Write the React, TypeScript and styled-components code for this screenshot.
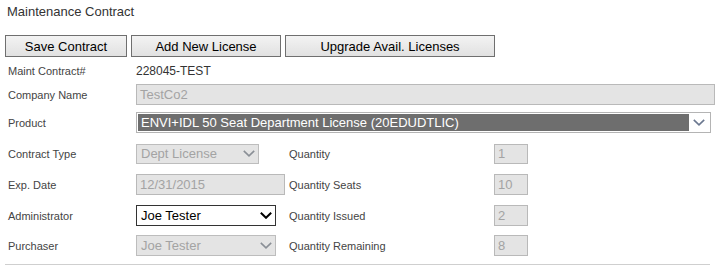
import React from "react";
import styled, { createGlobalStyle } from "styled-components";

const Global = createGlobalStyle`
  html, body { margin: 0; padding: 0; background: #fff; }
  body { font-family: Arial, "Liberation Sans", sans-serif; color: #333; }
`;

const Page = styled.div`
  width: 722px;
  height: 266px;
  overflow: hidden;
`;

const Title = styled.div`
  margin: 4px 0 0 7px;
  font-size: 13px;
  line-height: 16px;
  color: #333;
`;

const Toolbar = styled.div`
  display: flex;
  gap: 4px;
  margin: 15px 0 0 5px;
`;

const Button = styled.button<{ $w: number }>`
  width: ${(p) => p.$w}px;
  height: 22px;
  box-sizing: border-box;
  border: 1px solid #6f6f6f;
  background: linear-gradient(#f3f3f3, #e1e1e1);
  font-family: Arial, "Liberation Sans", sans-serif;
  font-size: 13px;
  color: #000;
  padding: 0;
  margin: 0;
`;

const Form = styled.div`
  margin: 3px 0 0 8px;
  display: flex;
  flex-direction: column;
`;

const Row = styled.div<{ $h: number }>`
  display: flex;
  align-items: center;
  height: ${(p) => p.$h}px;
`;

const Label = styled.div<{ $w: number }>`
  width: ${(p) => p.$w}px;
  flex: none;
  font-size: 11px;
  color: #444;
`;

const Value = styled.div`
  font-size: 12px;
  color: #333;
`;

const Cell = styled.div`
  width: 153px;
  flex: none;
  display: flex;
`;

const TextBox = styled.div<{ $w: number; $h?: number }>`
  width: ${(p) => p.$w}px;
  height: ${(p) => p.$h ?? 21}px;
  box-sizing: border-box;
  border: 1px solid #b9b9b9;
  background: #e4e4e4;
  color: #a3a3a3;
  font-size: 13px;
  line-height: ${(p) => (p.$h ?? 21) - 2}px;
  padding-left: 3px;
  white-space: nowrap;
`;

const SelectBox = styled.div<{ $w: number; $h?: number; $enabled?: boolean }>`
  width: ${(p) => p.$w}px;
  height: ${(p) => p.$h ?? 21}px;
  box-sizing: border-box;
  border: 1px solid ${(p) => (p.$enabled ? "#333" : "#bdbdbd")};
  background: ${(p) => (p.$enabled ? "#fff" : "#e4e4e4")};
  color: ${(p) => (p.$enabled ? "#000" : "#a3a3a3")};
  font-size: 13px;
  display: flex;
  align-items: center;
  justify-content: space-between;
  padding: 0 3px 0 4px;
  white-space: nowrap;
`;

const ProductBox = styled.div`
  width: 575px;
  height: 21px;
  box-sizing: border-box;
  border: 1px solid #b4b4b4;
  background: #fff;
  display: flex;
  align-items: stretch;
  padding: 1px;
`;

const Highlight = styled.div`
  flex: 1;
  background: #6e6e6e;
  color: #fff;
  font-size: 13px;
  line-height: 17px;
  padding-left: 3px;
  white-space: nowrap;
`;

const ChevronCell = styled.div`
  width: 20px;
  display: flex;
  align-items: center;
  justify-content: center;
`;

const Rule = styled.div`
  margin: 4px 12px 0 5px;
  border-top: 1px solid #cfcfcf;
`;

const Chevron = ({ color, weight }: { color: string; weight: number }) => (
  <svg width="12" height="7" viewBox="0 0 12 7">
    <polyline
      points="0.8,0.8 6,5.8 11.2,0.8"
      fill="none"
      stroke={color}
      strokeWidth={weight}
    />
  </svg>
);

export default function App() {
  return (
    <Page>
      <Global />
      <Title>Maintenance Contract</Title>
      <Toolbar>
        <Button $w={122}>Save Contract</Button>
        <Button $w={150}>Add New License</Button>
        <Button $w={210}>Upgrade Avail. Licenses</Button>
      </Toolbar>
      <Form>
        <Row $h={22}>
          <Label $w={128}>Maint Contract#</Label>
          <Value>228045-TEST</Value>
        </Row>
        <Row $h={25}>
          <Label $w={128}>Company Name</Label>
          <TextBox $w={579}>TestCo2</TextBox>
        </Row>
        <Row $h={31}>
          <Label $w={128}>Product</Label>
          <ProductBox>
            <Highlight>ENVI+IDL 50 Seat Department License (20EDUDTLIC)</Highlight>
            <ChevronCell>
              <Chevron color="#6b7890" weight={1.6} />
            </ChevronCell>
          </ProductBox>
        </Row>
        <Row $h={31}>
          <Label $w={128}>Contract Type</Label>
          <Cell>
            <SelectBox $w={123} $h={20}>
              Dept License
              <Chevron color="#8a8f96" weight={1.6} />
            </SelectBox>
          </Cell>
          <Label $w={205}>Quantity</Label>
          <TextBox $w={34} $h={20}>1</TextBox>
        </Row>
        <Row $h={31}>
          <Label $w={128}>Exp. Date</Label>
          <Cell>
            <TextBox $w={149}>12/31/2015</TextBox>
          </Cell>
          <Label $w={205}>Quantity Seats</Label>
          <TextBox $w={34}>10</TextBox>
        </Row>
        <Row $h={31}>
          <Label $w={128}>Administrator</Label>
          <Cell>
            <SelectBox $w={140} $enabled>
              Joe Tester
              <Chevron color="#000" weight={2} />
            </SelectBox>
          </Cell>
          <Label $w={205}>Quantity Issued</Label>
          <TextBox $w={34}>2</TextBox>
        </Row>
        <Row $h={29}>
          <Label $w={128}>Purchaser</Label>
          <Cell>
            <SelectBox $w={140}>
              Joe Tester
              <Chevron color="#8a8f96" weight={1.6} />
            </SelectBox>
          </Cell>
          <Label $w={205}>Quantity Remaining</Label>
          <TextBox $w={34}>8</TextBox>
        </Row>
      </Form>
      <Rule />
    </Page>
  );
}
